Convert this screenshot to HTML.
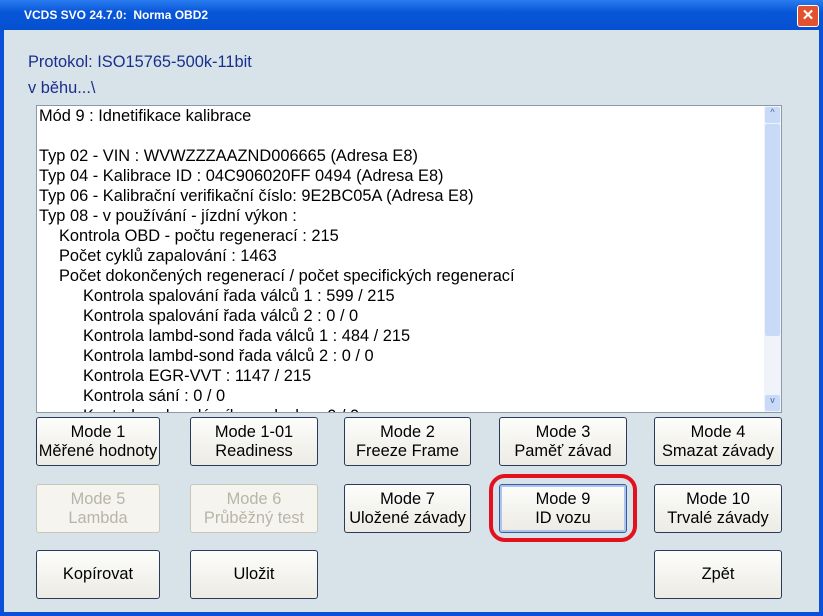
<!DOCTYPE html><html><head><style>
body{margin:0;width:823px;height:616px;overflow:hidden;font-family:"Liberation Sans",sans-serif;}
.win{position:absolute;left:0;top:0;width:823px;height:616px;background:#0a50d8;}
.title{position:absolute;left:0;top:0;width:823px;height:30px;background:linear-gradient(#2a7cf0,#0856d8 40%,#0550d0);}
.title span{position:absolute;left:24px;top:8px;color:#fff;font-weight:bold;font-size:12px;}
.close{position:absolute;left:797px;top:5px;width:20px;height:20px;background:#e0532e;border:1px solid #fff;border-radius:3px;color:#fff;font-size:15px;text-align:center;line-height:20px;font-weight:bold}
.body{position:absolute;left:4px;top:30px;width:815px;height:582px;background:#d7e3e9;}
.lbl{position:absolute;left:28px;color:#1a2f8c;font-size:16.4px;}
.box{position:absolute;left:36px;top:105px;width:746px;height:308px;background:#fff;border:1px solid #8a9aa8;box-sizing:border-box;overflow:hidden;font-size:16.4px;color:#000}
.box div{position:absolute;white-space:pre;}
.sb{position:absolute;right:0;top:0;width:17px;height:306px;background:#f0f4fa;}
.btn{position:absolute;width:124px;height:49px;background:linear-gradient(#fdfdfb,#ecebe4);border:1px solid #2b3a5a;border-radius:3px;box-sizing:border-box;text-align:center;font-size:16.4px;line-height:19px;display:flex;align-items:center;justify-content:center;color:#000}
.dis{color:#b8b5a8;border-color:#c9c7ba;background:#f5f4ee}
</style></head><body><div class="win">
<div class="title"><span>VCDS SVO 24.7.0:&nbsp; Norma OBD2</span><div class="close">✕</div></div>
<div class="body"></div>
<div class="lbl" style="top:53px">Protokol: ISO15765-500k-11bit</div>
<div class="lbl" style="top:79px">v běhu...\</div>
<div class="box">
<div style="left:2px;top:1px">Mód 9 : Idnetifikace kalibrace</div>
<div style="left:2px;top:41px">Typ 02 - VIN : WVWZZZAAZND006665 (Adresa E8)</div>
<div style="left:2px;top:61px">Typ 04 - Kalibrace ID : 04C906020FF 0494 (Adresa E8)</div>
<div style="left:2px;top:81px">Typ 06 - Kalibrační verifikační číslo: 9E2BC05A (Adresa E8)</div>
<div style="left:2px;top:101px">Typ 08 - v používání - jízdní výkon :</div>
<div style="left:22px;top:121px">Kontrola OBD - počtu regenerací : 215</div>
<div style="left:22px;top:141px">Počet cyklů zapalování : 1463</div>
<div style="left:22px;top:161px">Počet dokončených regenerací / počet specifických regenerací</div>
<div style="left:46px;top:181px">Kontrola spalování řada válců 1 : 599 / 215</div>
<div style="left:46px;top:201px">Kontrola spalování řada válců 2 : 0 / 0</div>
<div style="left:46px;top:221px">Kontrola lambd-sond řada válců 1 : 484 / 215</div>
<div style="left:46px;top:241px">Kontrola lambd-sond řada válců 2 : 0 / 0</div>
<div style="left:46px;top:261px">Kontrola EGR-VVT : 1147 / 215</div>
<div style="left:46px;top:281px">Kontrola sání : 0 / 0</div>
<div style="left:46px;top:301px">Kontrola sekundárního vzduchu : 0 / 0</div>
<div class="sb"><div style="left:1px;top:1px;width:15px;height:16px;background:#c8daf8;border-radius:2px;font-size:9px;text-align:center;color:#4d6185">^</div><div style="left:1px;top:18px;width:15px;height:212px;background:#c8daf8;border-radius:2px"></div><div style="left:1px;top:289px;width:15px;height:16px;background:#c8daf8;border-radius:2px;font-size:9px;text-align:center;color:#4d6185">v</div></div>
</div>
<div class="btn" style="left:36px;top:417px">Mode 1<br>Měřené hodnoty</div>
<div class="btn" style="left:190px;top:417px;width:128px">Mode 1-01<br>Readiness</div>
<div class="btn" style="left:344px;top:417px;width:127px">Mode 2<br>Freeze Frame</div>
<div class="btn" style="left:499px;top:417px;width:128px">Mode 3<br>Paměť závad</div>
<div class="btn" style="left:654px;top:417px;width:128px">Mode 4<br>Smazat závady</div>
<div class="btn dis" style="left:36px;top:484px">Mode 5<br>Lambda</div>
<div class="btn dis" style="left:190px;top:484px;width:128px">Mode 6<br>Průběžný test</div>
<div class="btn" style="left:344px;top:484px;width:127px">Mode 7<br>Uložené závady</div>
<div style="position:absolute;left:489px;top:474px;width:148px;height:68px;border:4px solid #e3101e;border-radius:16px;box-sizing:border-box"></div>
<div class="btn" style="left:499px;top:484px;width:128px;border-color:#3d5a9a;box-shadow:inset 0 0 0 2px #aac4ee">Mode 9<br>ID vozu</div>
<div class="btn" style="left:654px;top:484px;width:128px">Mode 10<br>Trvalé závady</div>
<div class="btn" style="left:36px;top:550px">Kopírovat</div>
<div class="btn" style="left:190px;top:550px;width:128px">Uložit</div>
<div class="btn" style="left:654px;top:550px;width:128px">Zpět</div>
</div></body></html>
